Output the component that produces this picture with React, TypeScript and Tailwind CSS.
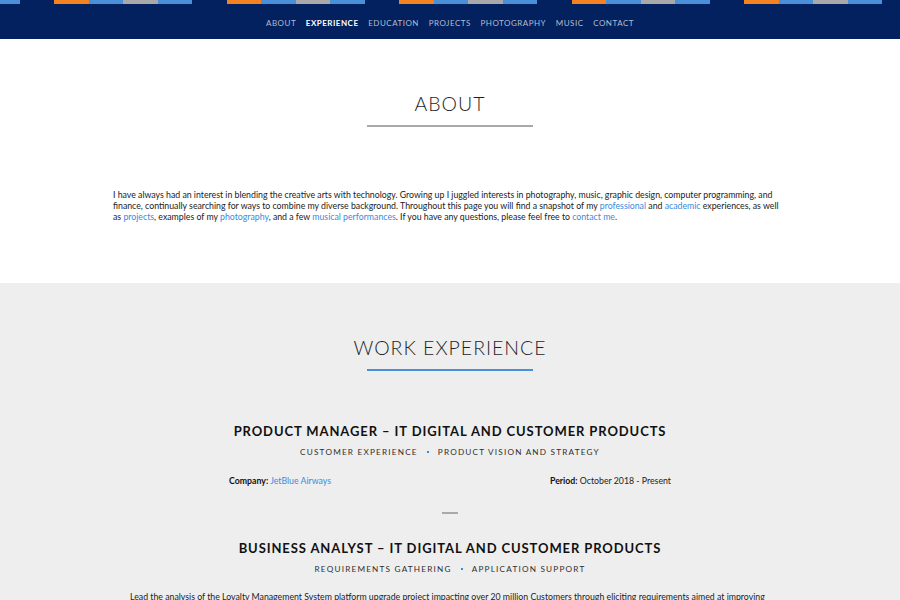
import React from "react";

const font = { fontFamily: "Lato, 'Liberation Sans', sans-serif" };

const stripeColors = ["bg-[#4a90d9]", "bg-transparent", "bg-[#f58220]", "bg-[#4a90d9]", "bg-[#a9a9a9]"];

function Stripe() {
  const segments = Array.from({ length: 28 }, (_, i) => stripeColors[i % 5]);
  return (
    <div className="flex h-[4px] overflow-hidden">
      <div className="flex shrink-0 -ml-[15px]">
        {segments.map((c, i) => (
          <div key={i} className={`h-[4px] w-[34.5px] shrink-0 ${c}`} />
        ))}
      </div>
    </div>
  );
}

const links = ["ABOUT", "EXPERIENCE", "EDUCATION", "PROJECTS", "PHOTOGRAPHY", "MUSIC", "CONTACT"];

function NavBar() {
  return (
    <header className="h-[39px] bg-[#03215f]">
      <Stripe />
      <nav className="flex justify-center gap-[9.7px] pt-[11.5px]">
        {links.map((l) => (
          <a
            key={l}
            className={
              l === "EXPERIENCE"
                ? "text-[8px] leading-[14px] tracking-[0.5px] font-bold text-white"
                : "text-[8px] leading-[14px] tracking-[0.5px] text-[#b4bccd]"
            }
          >
            {l}
          </a>
        ))}
      </nav>
    </header>
  );
}

function SectionHeading({ title, line }: { title: string; line: string }) {
  return (
    <div className="flex flex-col items-center">
      <h2 className="text-[19.5px] leading-[28px] font-light tracking-[1px] text-[#1f1f2b]">{title}</h2>
      <div className={`mt-[7px] h-[2px] w-[166px] ${line}`} />
    </div>
  );
}

const Link = ({ children }: { children: React.ReactNode }) => (
  <a className="text-[#3b8ae0]">{children}</a>
);

function Job({
  title,
  tags,
  children,
}: {
  title: string;
  tags: [string, string];
  children: React.ReactNode;
}) {
  return (
    <div className="flex flex-col items-center">
      <h3 className="text-[13px] leading-[20px] font-bold tracking-[0.9px] text-[#111]">{title}</h3>
      <div className="mt-[3.5px] flex items-center gap-[9px] text-[8.2px] leading-[14px] tracking-[1.2px] text-[#2e2e2e]">
        <span>{tags[0]}</span>
        <span className="h-[2px] w-[2px] bg-[#3b8ae0]" />
        <span>{tags[1]}</span>
      </div>
      {children}
    </div>
  );
}

export default function App() {
  return (
    <div className="h-[600px] overflow-hidden bg-white" style={font}>
      <NavBar />

      <section className="bg-white pt-[51px] pb-[61px]">
        <SectionHeading title="ABOUT" line="bg-[#a9a9a9]" />
        <p className="mx-auto mt-[61.5px] w-[674px] text-[8.75px] leading-[11px] text-[#222]">
          I have always had an interest in blending the creative arts with technology. Growing up I juggled interests
          in photography, music, graphic design, computer programming, and finance, continually searching for ways to
          combine my diverse background. Throughout this page you will find a snapshot of my{" "}
          <Link>professional</Link> and <Link>academic</Link> experiences, as well as <Link>projects</Link>, examples of
          my <Link>photography</Link>, and a few <Link>musical performances</Link>. If you have any questions, please
          feel free to <Link>contact me</Link>.
        </p>
      </section>

      <section className="bg-[#eeeeee] pt-[51px] pb-[40px]">
        <SectionHeading title="WORK EXPERIENCE" line="bg-[#4a90d9]" />

        <div className="mt-[50.5px]">
          <Job
            title="PRODUCT MANAGER – IT DIGITAL AND CUSTOMER PRODUCTS"
            tags={["CUSTOMER EXPERIENCE", "PRODUCT VISION AND STRATEGY"]}
          >
            <div className="mt-[15px] flex w-[442px] justify-between text-[8.75px] leading-[14px] text-[#222]">
              <span>
                <b className="text-[#111]">Company:</b> <Link>JetBlue Airways</Link>
              </span>
              <span>
                <b className="text-[#111]">Period:</b> October 2018 - Present
              </span>
            </div>
          </Job>
        </div>

        <div className="mx-auto mt-[24px] h-[2px] w-[16px] bg-[#a9a9a9]" />

        <div className="mt-[24.5px]">
          <Job
            title="BUSINESS ANALYST – IT DIGITAL AND CUSTOMER PRODUCTS"
            tags={["REQUIREMENTS GATHERING", "APPLICATION SUPPORT"]}
          >
            <p className="mt-[15px] w-[640px] text-[8.75px] leading-[11px] text-[#222]">
              Lead the analysis of the Loyalty Management System platform upgrade project impacting over 20 million
              Customers through eliciting requirements aimed at improving the Customer experience and operational
              efficiency.
            </p>
          </Job>
        </div>
      </section>
    </div>
  );
}
